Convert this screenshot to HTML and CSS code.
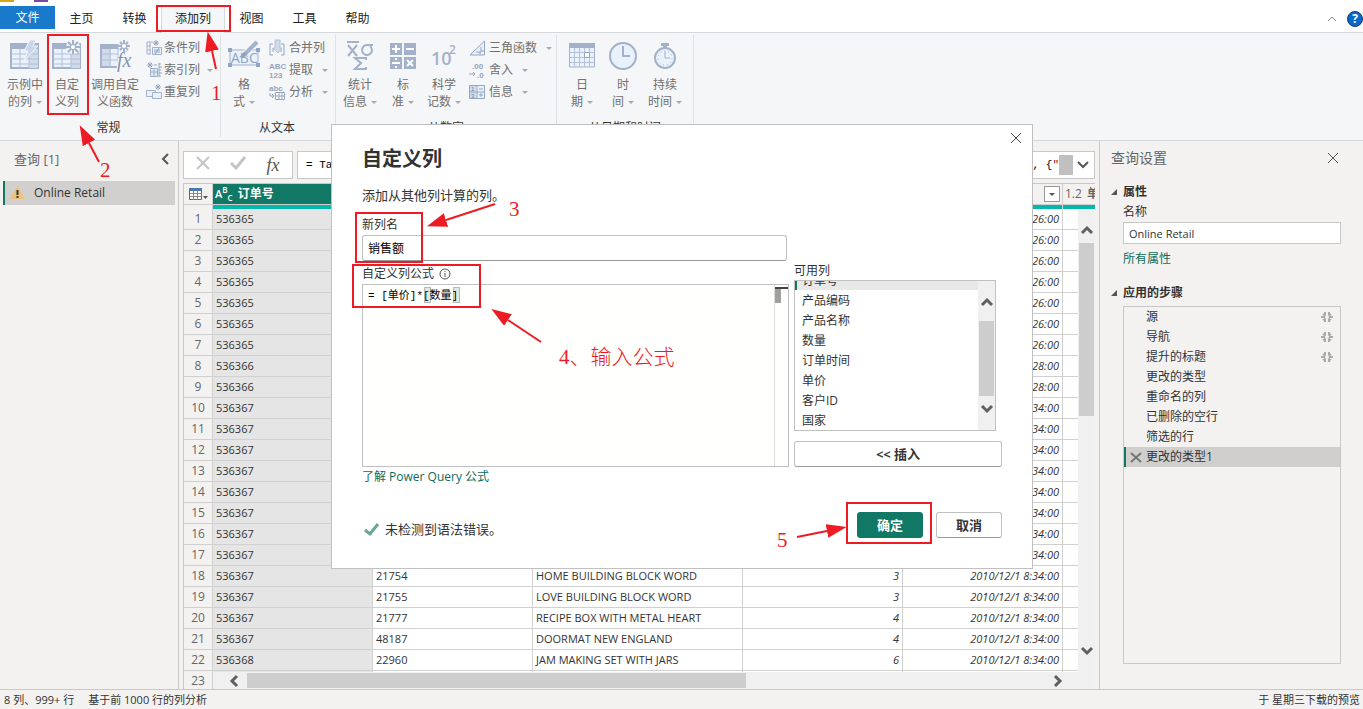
FILE: index.html
```
<!DOCTYPE html>
<html lang="zh-CN">
<head>
  <meta charset="UTF-8" />
  <meta name="viewport" content="width=device-width, initial-scale=1.0"/>
  <title>Power Query 编辑器</title>
  <link rel="stylesheet" href="styles.css">
</head>
<body>
  <div class="titlebar"><span class="logo"></span><span class="save"></span></div>

  <nav class="tabs">
    <button class="tab file">文件</button>
    <button class="tab">主页</button>
    <button class="tab">转换</button>
    <button class="tab active">添加列</button>
    <button class="tab">视图</button>
    <button class="tab">工具</button>
    <button class="tab">帮助</button>
    <span class="tab-right">
      <svg width="10" height="6"><path d="M1 5l4-4 4 4" fill="none" stroke="#888"/></svg>
      <button class="help" aria-label="帮助">?</button>
    </span>
  </nav>

  <div class="ribbon">
    <section class="group g-general">
      <div class="tools">
        <button class="big w44">
          <svg width="30" height="32" viewBox="0 0 30 32"><path d="M1 4h27v24H1z" fill="#e9f2fc" stroke="#a3b2ca" stroke-width="2"/><path d="M0 3h29v6H0z" fill="#a3b2ca"/><path d="M19 9h9v19h-9z" fill="#cfdaea"/><path d="M1 14h27M1 19h27M1 24h27M10 9v19M19 9v19" stroke="#b4c1d6" fill="none"/><path d="M20 0h6l-3 6h5L14 21l4-10h-4z" fill="#c9d7eb" stroke="#f5f6f8"/></svg>
          <span>示例中<br>的列<i class="caret"></i></span>
        </button>
        <button class="big w40">
          <svg width="30" height="32" viewBox="0 0 30 32"><path d="M1 4h27v24H1z" fill="#e9f2fc" stroke="#a3b2ca" stroke-width="2"/><path d="M0 3h29v6H0z" fill="#a3b2ca"/><path d="M19 9h9v19h-9z" fill="#cfdaea"/><path d="M1 14h27M1 19h27M1 24h27M10 9v19M19 9v19" stroke="#b4c1d6" fill="none"/><circle cx="21" cy="7" r="7" fill="#f0f3f8"/><path d="M21 0v14M14 7h14M16 2l10 10M26 2L16 12" stroke="#a3b2ca" stroke-width="2"/><circle cx="21" cy="7" r="2" fill="#fff"/></svg>
          <span>自定<br>义列</span>
        </button>
        <button class="big w56">
          <svg width="32" height="32" viewBox="0 0 32 32"><path d="M2 5h25v22H2z" fill="#e9f2fc" stroke="#a3b2ca" stroke-width="2"/><path d="M1 4h20v5H1z" fill="#a3b2ca"/><path d="M3 9h9v17H3z" fill="#cfdaea"/><path d="M2 14h25M2 20h25M11 9v18M19 9v18" stroke="#b4c1d6"/><path d="M20 12h12v20H17z" fill="#f5f6f8"/><circle cx="25" cy="6" r="6" fill="#f0f3f8"/><path d="M25 0v12M19 6h12M21 2l8 8M29 2l-8 8" stroke="#a3b2ca" stroke-width="2"/><circle cx="25" cy="6" r="2" fill="#fff"/><text x="18" y="27" class="fx">fx</text></svg>
          <span>调用自定<br>义函数</span>
        </button>
        <div class="small-tools">
          <button class="small"><svg width="16" height="16"><path d="M7 2H1v12h4M1 6h4M1 10h4M4 2v12" fill="none" stroke="#a3b2ca"/><path d="M6.500 7.500h9v7h-9z" fill="#e9f2fc" stroke="#a3b2ca"/><path d="M8 10h6M8 12h6M13 8l-4 6M10 0v6M7 3h6M8 1l4 4M12 1L8 5" stroke="#94a5c2"/></svg>条件列</button>
          <button class="small"><svg width="16" height="16"><path d="M4.500 6.500h7v8h-7zM4 10h7M8 6v8" fill="#dce6f4" stroke="#a3b2ca"/><path d="M13 1v14M15 2h-2M16 5h-3M15 8h-2M16 11h-3M15 14h-2M4 0v6M1 3h6M2 1l4 4M6 1L2 5M8 3h3" stroke="#94a5c2"/></svg>索引列<i class="caret"></i></button>
          <button class="small"><svg width="16" height="16"><path d="M.5 6.500h9v6h-9z" fill="#e9f2fc" stroke="#a3b2ca"/><path d="M6.500 8.500h9v6h-9z" fill="#e9f2fc" stroke="#a3b2ca"/><path d="M12 0v6M9 3h6M10 1l4 4M14 1l-4 4" stroke="#94a5c2"/></svg>重复列</button>
        </div>
      </div>
      <h2>常规</h2>
    </section>

    <section class="group g-text">
      <div class="tools">
        <button class="big w44">
          <svg width="32" height="32" viewBox="0 0 32 32"><path d="M2 10h28v15H2z" fill="#e9f2fc" stroke="#a3b2ca"/><path d="M0 8h4v4H0zM28 8h4v4h-4zM0 23h4v4H0zM28 23h4v4h-4z" fill="#94a5c2"/><text x="3" y="23" class="abc">ABC</text><path d="M29 1L16 15" stroke="#f5f6f8" stroke-width="6"/><path d="M29 2L17 14" stroke="#a3b2ca" stroke-width="4"/><path d="M17 12c-4 0-3 4-6 5 4 1 8 0 8-3z" fill="#94a5c2"/></svg>
          <span>格<br>式<i class="caret"></i></span>
        </button>
        <div class="small-tools">
          <button class="small"><svg width="16" height="16"><path d="M4 4H1v11h3M12 4h3v11h-3M4 8v4M12 8v4" fill="none" stroke="#94a5c2"/><path d="M6 0h5v8h2l-4 5-5-5h2z" fill="#cfdaea" stroke="#b4c1d6"/></svg>合并列</button>
          <button class="small"><svg width="16" height="16"><text x="0" y="7" class="mini">ABC</text><text x="0" y="16" class="mini">123</text></svg>提取<i class="caret"></i></button>
          <button class="small"><svg width="16" height="16"><text x="0" y="7" class="mini">abc</text><path d="M6.500 8.500h9v7h-9zM7 12h9M10 9v6M13 9v6" fill="#fff" stroke="#94a5c2"/><path d="M1 9v3h4M3 10l2 2-2 2" fill="none" stroke="#94a5c2"/></svg>分析<i class="caret"></i></button>
        </div>
      </div>
      <h2>从文本</h2>
    </section>

    <section class="group g-number">
      <div class="tools">
        <button class="big w48">
          <svg width="28" height="32" viewBox="0 0 28 32"><path d="M1 2h12M2 5l9 11M11 5L2 16M27 5h-6a5 5 0 1 0 3 1" fill="none" stroke="#a3b2ca" stroke-width="2"/><path d="M20 20v-2H9l6 5-6 6h11v-2" fill="none" stroke="#a3b2ca" stroke-width="2"/></svg>
          <span>统计<br>信息<i class="caret"></i></span>
        </button>
        <button class="big w38">
          <svg width="26" height="32" viewBox="0 0 26 32"><path d="M0 3h12v12H0zM14 3h12v12H14zM0 17h12v12H0zM14 17h12v12H14z" fill="#a3b2ca"/><path d="M2 9h8M6 5v8M16 9h8M2 23h8M17 20l6 6M23 20l-6 6M5 19h2M5 27h2" stroke="#fff" stroke-width="2"/></svg>
          <span>标<br>准<i class="caret"></i></span>
        </button>
        <button class="big w44">
          <svg width="26" height="32" viewBox="0 0 26 32"><text x="0" y="25" class="ten">10</text><text x="18" y="14" class="two">2</text></svg>
          <span>科学<br>记数<i class="caret"></i></span>
        </button>
        <div class="small-tools">
          <button class="small"><svg width="16" height="16"><path d="M15.500 1v14H1z" fill="#e9f2fc" stroke="#94a5c2"/><path d="M12 7v5H7M12 11h3M11 12v3" fill="none" stroke="#94a5c2"/></svg>三角函数<i class="caret"></i></button>
          <button class="small"><svg width="16" height="16"><text x="3" y="7" class="mini">.00</text><text x="8" y="16" class="mini">.0</text><path d="M0 12h6M4 10l2 2-2 2" fill="none" stroke="#94a5c2"/></svg>舍入<i class="caret"></i></button>
          <button class="small"><svg width="16" height="16"><path d="M.5 1.500h15v13H.5z" fill="#e9f2fc" stroke="#94a5c2"/><path d="M1 2h6v12H1z" fill="#cfdaea"/><path d="M8 1v14M1 8h14M10 5h4M10 11h4M12 9v4" stroke="#94a5c2"/><text x="2" y="7" class="tiny">1</text><text x="2" y="14" class="tiny">3</text></svg>信息<i class="caret"></i></button>
        </div>
      </div>
      <h2>从数字</h2>
    </section>

    <section class="group g-date">
      <div class="tools">
        <button class="big w50">
          <svg width="26" height="32" viewBox="0 0 26 32"><path d="M.5 4h25v23H.5z" fill="#e9f2fc" stroke="#a3b2ca"/><path d="M0 3h26v5H0z" fill="#a3b2ca"/><path d="M1 12.500h24M1 17.500h24M1 22.500h24M5.500 8v19M10.500 8v19M15.500 8v19M20.500 8v19" stroke="#b4c1d6"/><path d="M15.500 12.500h5v5h-5z" fill="#fff" stroke="#94a5c2"/></svg>
          <span>日<br>期<i class="caret"></i></span>
        </button>
        <button class="big w32">
          <svg width="28" height="32" viewBox="0 0 28 32"><circle cx="14" cy="16" r="13" fill="#e9f2fc" stroke="#a3b2ca" stroke-width="2"/><path d="M14 6v10h7" fill="none" stroke="#a3b2ca" stroke-width="2"/></svg>
          <span>时<br>间<i class="caret"></i></span>
        </button>
        <button class="big w52">
          <svg width="22" height="32" viewBox="0 0 22 32"><circle cx="11" cy="18" r="10" fill="#e9f2fc" stroke="#a3b2ca" stroke-width="2"/><circle cx="11" cy="18" r="7" fill="none" stroke="#a3b2ca" stroke-dasharray="1 3"/><path d="M7 3h8v3h-2v3H9V6H7z" fill="#a3b2ca"/><path d="M11 11v7h5" fill="none" stroke="#a3b2ca"/></svg>
          <span>持续<br>时间<i class="caret"></i></span>
        </button>
      </div>
      <h2>从日期和时间</h2>
    </section>
  </div>

  <main class="workspace">
    <aside class="queries">
      <header><h2>查询 [1]</h2><svg width="8" height="12"><path d="M7 1L2 6l5 5" fill="none" stroke="#555" stroke-width="2"/></svg></header>
      <a class="query" href="#"><svg width="15" height="14"><path d="M7.500 0L15 13H0z" fill="#edc27c"/><path d="M7.500 4v5M7.500 10v2" stroke="#333" stroke-width="2"/></svg>Online Retail</a>
    </aside>

    <section class="preview">
      <div class="formula-bar">
        <div class="formula-actions">
          <button aria-label="取消"><svg width="16" height="14"><path d="M2 1l12 12M14 1L2 13" stroke="#c4c4c4" stroke-width="2"/></svg></button>
          <button aria-label="确认"><svg width="16" height="14"><path d="M1 7l5 5L15 1" fill="none" stroke="#c4c4c4" stroke-width="3"/></svg></button>
          <button class="fx-btn">fx</button>
        </div>
        <div class="formula-text">
          <input type="text" value="= Table" aria-label="公式">
          <span>, {<b>"</b></span><i class="block"></i>
          <svg width="12" height="8"><path d="M1 1l5 5 5-5" fill="none" stroke="#555" stroke-width="2"/></svg>
        </div>
      </div>

      <div class="grid">
        <table>
          <colgroup><col class="c-num"><col class="c-std"><col class="c-std"><col class="c-wide"><col class="c-std"><col class="c-std"><col class="c-std"></colgroup>
          <thead>
            <tr>
              <th><svg width="20" height="13"><path d="M.5.500h12v11H.5z" fill="#fff" stroke="#666"/><path d="M0 0h13v3H0z" fill="#4a79b0"/><path d="M1 5.500h12M1 8.500h12M4.500 3v9M8.500 3v9" stroke="#888"/><path d="M14 8h5l-2.500 3z" fill="#555"/></svg></th>
              <th class="picked"><span class="type">A<sup>B</sup><sub>C</sub></span>订单号</th>
              <th></th><th></th><th></th>
              <th class="menu"><button aria-label="筛选"><i class="caret"></i></button></th>
              <th class="num-type"><span>1.2</span>单价</th>
            </tr>
            <tr class="quality"><td></td><td></td><td></td><td></td><td></td><td></td><td></td></tr>
          </thead>
          <tbody id="rows"></tbody>
        </table>
        <div class="vscroll"><svg width="12" height="9"><path d="M1 7l5-5 5 5" fill="none" stroke="#606060" stroke-width="3"/></svg><i></i><svg width="12" height="9"><path d="M1 2l5 5 5-5" fill="none" stroke="#606060" stroke-width="3"/></svg></div>
        <div class="hscroll"><svg width="9" height="12"><path d="M7 1L2 6l5 5" fill="none" stroke="#606060" stroke-width="3"/></svg><i></i><svg width="9" height="12"><path d="M2 1l5 5-5 5" fill="none" stroke="#606060" stroke-width="3"/></svg></div>
      </div>
    </section>

    <aside class="settings">
      <header><h2>查询设置</h2><button class="close" aria-label="关闭"><svg width="12" height="12"><path d="M1 1l10 10M11 1L1 11" stroke="#555"/></svg></button></header>
      <h3>属性</h3>
      <label for="queryName">名称</label>
      <input id="queryName" type="text" value="Online Retail">
      <a class="all-props" href="#">所有属性</a>
      <h3>应用的步骤</h3>
      <ul class="steps" id="steps"></ul>
    </aside>
  </main>

  <footer class="statusbar"><span>8 列、999+ 行</span><span>基于前 1000 行的列分析</span><span class="right">于 星期三下载的预览</span></footer>

  <svg class="marks" width="240" height="190">
    <defs>
      <marker id="head" viewBox="0 0 20 14" refX="0" refY="7" markerWidth="20" markerHeight="14" markerUnits="userSpaceOnUse" orient="auto"><path d="M0 0l20 7L0 14z" fill="#ed1c24"/></marker>
    </defs>
    <rect x="157" y="6" width="73" height="25"/>
    <rect x="48" y="35" width="40" height="79"/>
    <line x1="216" y1="69" x2="212" y2="51"/>
    <line x1="99" y1="162" x2="89" y2="143"/>
    <text x="211" y="100">1</text>
    <text x="100" y="177">2</text>
  </svg>

  <div class="overlay">
    <form class="dialog" role="dialog" aria-labelledby="dlgTitle">
      <button type="button" class="close dialog-close" aria-label="关闭"><svg width="12" height="12"><path d="M1 1l10 10M11 1L1 11" stroke="#444"/></svg></button>
      <h1 id="dlgTitle">自定义列</h1>
      <p class="intro">添加从其他列计算的列。</p>
      <div class="fields">
        <div class="left">
          <label for="colName">新列名</label>
          <input id="colName" type="text" value="销售额">
          <label for="formula" class="formula-label">自定义列公式 <svg width="12" height="12"><circle cx="6" cy="6" r="5" fill="none" stroke="#555"/><path d="M6 5v4M6 3v1" stroke="#555"/></svg></label>
          <div class="editor">
            <i class="bracket open"></i><i class="bracket end"></i>
            <textarea id="formula" spellcheck="false">= [单价]*[数量]</textarea>
            <div class="ruler"></div>
          </div>
        </div>
        <div class="available">
          <span id="avail">可用列</span>
          <div class="listbox">
            <ul role="listbox" aria-labelledby="avail">
              <li role="option" class="on">订单号</li>
              <li role="option">产品编码</li>
              <li role="option">产品名称</li>
              <li role="option">数量</li>
              <li role="option">订单时间</li>
              <li role="option">单价</li>
              <li role="option">客户ID</li>
              <li role="option">国家</li>
            </ul>
            <div class="list-scroll"><svg width="12" height="9"><path d="M1 7l5-5 5 5" fill="none" stroke="#606060" stroke-width="3"/></svg><i></i><svg width="12" height="9"><path d="M1 2l5 5 5-5" fill="none" stroke="#606060" stroke-width="3"/></svg></div>
          </div>
          <button type="button" class="btn">&lt;&lt; 插入</button>
        </div>
      </div>
      <a class="learn" href="#">了解 Power Query 公式</a>
      <div class="actions">
        <span class="status"><svg width="15" height="13"><path d="M1 7l5 4L14 1" fill="none" stroke="#6aa896" stroke-width="3"/></svg>未检测到语法错误。</span>
        <button type="button" class="btn primary">确定</button>
        <button type="button" class="btn">取消</button>
      </div>
      <svg class="marks" width="702" height="445" viewBox="331 124 702 445">
        <rect x="356" y="213" width="66" height="49"/>
        <rect x="353" y="265" width="127" height="42"/>
        <rect x="847" y="503" width="84" height="40"/>
        <line x1="495" y1="204" x2="446" y2="220"/>
        <line x1="541" y1="342" x2="508" y2="320"/>
        <line x1="797" y1="537" x2="827" y2="531"/>
        <text x="509" y="216">3</text>
        <text x="559" y="364">4、输入公式</text>
        <text x="777" y="547">5</text>
      </svg>
    </form>
  </div>

  <script>
    const orders = [
      [536365, "", "", "", "8:26"], [536365, "", "", "", "8:26"], [536365, "", "", "", "8:26"],
      [536365, "", "", "", "8:26"], [536365, "", "", "", "8:26"], [536365, "", "", "", "8:26"],
      [536365, "", "", "", "8:26"], [536366, "", "", "", "8:28"], [536366, "", "", "", "8:28"],
      [536367, "", "", "", "8:34"], [536367, "", "", "", "8:34"], [536367, "", "", "", "8:34"],
      [536367, "", "", "", "8:34"], [536367, "", "", "", "8:34"], [536367, "", "", "", "8:34"],
      [536367, "", "", "", "8:34"], [536367, "", "", "", "8:34"],
      [536367, "21754", "HOME BUILDING BLOCK WORD", 3, "8:34"],
      [536367, "21755", "LOVE BUILDING BLOCK WORD", 3, "8:34"],
      [536367, "21777", "RECIPE BOX WITH METAL HEART", 4, "8:34"],
      [536367, "48187", "DOORMAT NEW ENGLAND", 4, "8:34"],
      [536368, "22960", "JAM MAKING SET WITH JARS", 6, "8:34"],
      ["", "", "", "", ""]
    ];
    document.getElementById("rows").innerHTML = orders.map((o, i) =>
      `<tr><th>${i + 1}</th><td class="picked">${o[0]}</td><td>${o[1]}</td><td>${o[2]}</td>` +
      `<td class="number">${o[3]}</td><td class="number">${o[4] ? `2010/12/1 ${o[4]}:00` : ""}</td><td></td></tr>`
    ).join("");

    const gear = '<svg width="12" height="12"><path d="M4 1v10M8 1v10M0 6h12M2 3l8 6M10 3l-8 6" stroke="#aaa" stroke-width="2"/><circle cx="6" cy="6" r="2" fill="#f3f2f1"/></svg>';
    const remove = '<svg class="remove" width="12" height="11"><path d="M1 1l10 9M11 1L1 10" stroke="#777" stroke-width="2"/></svg>';
    const steps = ["源", "导航", "提升的标题", "更改的类型", "重命名的列", "已删除的空行", "筛选的行", "更改的类型1"];
    document.getElementById("steps").innerHTML = steps.map((s, i) =>
      i === steps.length - 1 ? `<li class="on">${remove}${s}</li>` : `<li>${s}${i < 3 ? gear : ""}</li>`
    ).join("");
  </script>
</body>
</html>
```
FILE: styles.css
```
* {
  box-sizing: border-box;
}

body {
  margin: 0;
  height: 100vh;
  display: flex;
  flex-direction: column;
  overflow: hidden;
  background: #f3f2f1;
  color: #333;
  font-family: "Open Sans", "Noto Sans CJK SC", sans-serif;
  font-size: 12px;
  line-height: 18px;
}

h1, h2, h3, p, ul {
  margin: 0;
  padding: 0;
  font-weight: normal;
  font-size: 12px;
}

ul {
  list-style: none;
}

button, input, textarea {
  font: inherit;
  color: inherit;
  border: 0;
  padding: 0;
  background: none;
}

a {
  color: #0f6b59;
  text-decoration: none;
}

svg {
  flex: none;
  overflow: visible;
}

.caret {
  display: inline-block;
  border: 3px solid transparent;
  border-top-color: #aaa;
  border-bottom: 0;
  margin-left: 5px;
  vertical-align: middle;
}

/* title bar and tabs */
.titlebar {
  flex: none;
  height: 6px;
  background: #fff;
  display: flex;
  gap: 20px;
}

.logo {
  width: 14px;
  height: 2px;
  background: #d9a514;
}

.save {
  width: 14px;
  height: 2px;
  background: #7b4ba0;
}

.tabs {
  flex: none;
  height: 27px;
  display: flex;
  background: #fff;
  border-bottom: 1px solid #d5d8db;
}

.tab {
  width: 53px;
  height: 25px;
  color: #222;
}

.tab.file {
  width: 55px;
  height: 23px;
  background: #1979ca;
  color: #fff;
}

.tab.active {
  width: 64px;
  height: 27px;
  padding-bottom: 2px;
  background: #f5f6f8;
  border: 1px solid #d5d8db;
  border-bottom: 0;
}

.tab-right {
  margin-left: auto;
  display: flex;
  align-items: center;
  gap: 10px;
}

.help {
  width: 16px;
  height: 16px;
  border-radius: 50%;
  background: #0a66c8;
  border: 1px solid #123c74;
  color: #fff;
  font-weight: bold;
  line-height: 14px;
}

/* ribbon */
.ribbon {
  flex: none;
  height: 108px;
  display: flex;
  padding: 2px 0 3px;
  background: #f5f6f8;
  border-bottom: 1px solid #d5d8db;
}

.group {
  display: flex;
  flex-direction: column;
  justify-content: space-between;
  border-right: 1px solid #dfe2e5;
}

.group h2 {
  text-align: center;
}

.g-general { width: 221px; padding-left: 3px; }
.g-general h2 { margin-right: 6px; }
.g-text { width: 115px; padding-left: 1px; }
.g-text h2 { margin-right: 3px; }
.g-number { width: 221px; }
.g-date { width: 137px; }

.tools {
  display: flex;
  padding-top: 2px;
}

.big {
  display: flex;
  flex-direction: column;
  align-items: center;
  padding-top: 3px;
  color: #707070;
  line-height: 17px;
  white-space: nowrap;
}

.big span {
  margin-top: 4px;
}

.big .caret {
  margin-left: 4px;
}

.w32 { width: 32px; }
.w38 { width: 38px; }
.w40 { width: 40px; }
.w44 { width: 44px; }
.w48 { width: 48px; }
.w50 { width: 50px; }
.w52 { width: 52px; }
.w56 { width: 56px; }

.small-tools {
  margin-left: 3px;
}

.small {
  display: flex;
  align-items: center;
  height: 22px;
  gap: 2px;
  color: #707070;
  white-space: nowrap;
}

.g-text .small, .g-number .small {
  gap: 4px;
}

.fx, .fx-btn {
  font-family: "Liberation Serif", serif;
  font-style: italic;
}

.fx {
  font-size: 20px;
  fill: #8494b0;
}

.abc {
  font-size: 14px;
  fill: #94a5c2;
}

.mini, .tiny {
  font-family: "Liberation Sans", sans-serif;
  line-height: 8px;
}

.mini {
  font-size: 8px;
  font-weight: bold;
  fill: #94a5c2;
}

.tiny {
  font-size: 6px;
  fill: #7486a8;
}

.ten {
  font-size: 18px;
  font-weight: 600;
  fill: #a3b2ca;
}

.two {
  font-size: 12px;
  font-weight: 600;
  fill: #a3b2ca;
}

/* main area */
.workspace {
  flex: 1;
  min-height: 0;
  display: flex;
}

.queries {
  width: 179px;
  padding: 9px 3px;
  border-right: 1px solid #c8c8c8;
}

.queries header, .settings header {
  display: flex;
  justify-content: space-between;
  align-items: center;
}

.queries header {
  padding: 0 6px 0 11px;
}

.queries h2, .settings h2 {
  font-size: 13px;
  color: #666;
}

.settings h2 {
  font-size: 14px;
}

.query {
  display: flex;
  align-items: center;
  gap: 9px;
  height: 24px;
  margin-top: 13px;
  padding-left: 5px;
  border-left: 2px solid #117865;
  background: #d2d0ce;
  color: #333;
}

.preview {
  flex: 1;
  min-width: 0;
  display: flex;
  flex-direction: column;
  padding: 10px 4px 0;
}

.formula-bar {
  display: flex;
  gap: 4px;
  height: 28px;
  margin-bottom: 4px;
}

.formula-actions, .formula-text {
  display: flex;
  align-items: center;
  background: #fff;
  border: 1px solid #c8c8c8;
}

.formula-actions {
  width: 110px;
  padding: 0 10px 0 11px;
  justify-content: space-between;
}

.fx-btn {
  width: 18px;
  font-size: 18px;
  color: #555;
}

.formula-text {
  flex: 1;
  padding: 0 5px 0 8px;
  font-family: "Liberation Mono", monospace;
  font-size: 11px;
  color: #000;
}

.formula-text input {
  flex: 1;
}

.formula-text b {
  font-weight: normal;
  color: #a31515;
}

.block {
  width: 14px;
  height: 20px;
  margin-right: 4px;
  background: #c0c0c0;
}

.grid {
  flex: 1;
  min-height: 0;
  position: relative;
  overflow: hidden;
  border: 1px solid #c8c8c8;
  border-width: 1px 0 0 1px;
  background: #fff;
}

.grid table {
  width: 1039px;
  table-layout: fixed;
  border-spacing: 0;
  font-size: 11px;
  line-height: 16px;
}

.c-num { width: 29px; }
.c-std { width: 160px; }
.c-wide { width: 210px; }

.grid th, .grid td {
  height: 21px;
  padding: 0 3px;
  border-right: 1px solid #d0d0d0;
  border-bottom: 1px solid #d0d0d0;
  white-space: nowrap;
}

.grid th {
  padding: 0;
  background: #f3f2f1;
  color: #666;
  font-weight: normal;
  font-size: 12px;
}

.grid thead svg {
  display: block;
  margin-left: 5px;
}

.grid thead .picked {
  background: #117865;
  color: #fff;
  font-weight: bold;
  text-align: left;
  line-height: 18px;
}

.type {
  display: inline-block;
  margin: 0 5px 0 2px;
  font-size: 11px;
  font-weight: 600;
}

.type sup, .type sub {
  font-size: 8px;
  line-height: 1px;
}

.grid thead .menu {
  text-align: right;
}

.menu button {
  width: 16px;
  height: 16px;
  margin-right: 2px;
  border: 1px solid #999;
  background: #fff;
  line-height: 10px;
}

.menu .caret {
  margin: 0;
  border-top-color: #555;
}

.grid .num-type {
  text-align: left;
  padding-left: 2px;
  font-weight: bold;
}

.num-type span {
  margin-right: 5px;
  font-weight: normal;
}

.quality td {
  height: 4px;
  background: #01b8aa;
  border-bottom: 0;
}

.quality td:first-child {
  background: #f3f2f1;
}

.grid td.picked {
  background: #e5e5e5;
}

.grid .number {
  text-align: right;
  font-style: italic;
}

/* scroll bars */
.vscroll, .list-scroll {
  display: flex;
  flex-direction: column;
  align-items: center;
  width: 17px;
  background: #f0f0f0;
}

.vscroll {
  position: absolute;
  top: 25px;
  right: 0;
  bottom: 17px;
  padding: 17px 0;
}

.vscroll i {
  width: 15px;
  height: 173px;
  margin: 8px 0 auto;
  background: #cdcdcd;
}

.hscroll {
  position: absolute;
  left: 29px;
  right: 0;
  bottom: 0;
  height: 17px;
  display: flex;
  align-items: center;
  padding: 0 33px 0 17px;
  background: #f0f0f0;
}

.hscroll i {
  width: 499px;
  height: 15px;
  margin: 0 auto 0 8px;
  background: #cdcdcd;
}

/* query settings */
.settings {
  width: 264px;
  padding: 8px 22px 25px 11px;
  border-left: 1px solid #c8c8c8;
  display: flex;
  flex-direction: column;
}

.settings header {
  margin-bottom: 15px;
}

.settings header .close {
  margin-right: 2px;
}

.close {
  width: 12px;
  height: 12px;
}

.close svg {
  display: block;
}

.settings h3 {
  font-weight: bold;
  line-height: 20px;
}

.settings h3::before {
  content: "";
  display: inline-block;
  margin-right: 6px;
  vertical-align: 1px;
  border: 3px solid #555;
  border-top-color: transparent;
  border-left-color: transparent;
}

.settings label, .all-props {
  margin-left: 12px;
  line-height: 20px;
}

.settings input {
  height: 22px;
  margin: 0 0 5px 12px;
  padding: 0 5px;
  font-size: 11px;
  background: #fff;
  border: 1px solid #c8c8c8;
}

.all-props {
  margin-bottom: 14px;
}

.steps {
  flex: 1;
  margin: 3px 0 0 12px;
  border: 1px solid #c8c8c8;
}

.steps li {
  display: flex;
  align-items: center;
  justify-content: space-between;
  height: 20px;
  padding: 0 7px 0 22px;
}

.steps .on {
  justify-content: flex-start;
  gap: 4px;
  padding-left: 4px;
  background: #d0cfce;
  border-left: 2px solid #117865;
}

.statusbar {
  flex: none;
  display: flex;
  gap: 14px;
  height: 20px;
  padding: 1px 3px 0 4px;
  border-top: 1px solid #c8c8c8;
  font-size: 11px;
}

.statusbar .right {
  margin-left: auto;
}

/* custom column dialog */
.overlay {
  position: fixed;
  inset: 0;
  display: flex;
  justify-content: center;
  align-items: flex-start;
  padding: 124px 0 0 1px;
}

.dialog {
  position: relative;
  width: 702px;
  padding: 21px 30px 30px;
  background: #fff;
  border: 1px solid #c0c0c0;
}

.dialog-close {
  position: absolute;
  top: 7px;
  right: 10px;
}

.dialog h1 {
  font-size: 20px;
  font-weight: bold;
  line-height: 26px;
}

.intro {
  margin: 14px 0 11px;
  font-size: 13px;
  line-height: 18px;
}

.fields {
  display: grid;
  grid-template-columns: 427px 208px;
  gap: 5px;
}

.left {
  display: flex;
  flex-direction: column;
}

.left input {
  width: 425px;
  height: 26px;
  padding: 0 5px;
  border: 1px solid #c0c0c0;
  border-bottom-color: #999;
  border-radius: 3px;
  color: #000;
}

.left label {
  line-height: 20px;
}

.formula-label {
  display: flex;
  align-items: center;
  gap: 5px;
  margin-top: 3px;
}

.editor {
  position: relative;
  display: flex;
  height: 183px;
  border: 1px solid #c0c0c0;
  background: #fffffe;
}

.editor textarea {
  position: relative;
  flex: 1;
  padding: 1px 5px;
  resize: none;
  outline: 0;
  font-family: "Liberation Mono", "Noto Sans CJK SC", monospace;
  font-size: 11px;
  line-height: 20px;
  color: #000;
}

.bracket {
  position: absolute;
  top: 2px;
  width: 7px;
  height: 16px;
  border: 1px solid #b9b9b9;
  background: #dfe9df;
}

.bracket.open { left: 61px; }
.bracket.end { left: 90px; }

.ruler {
  width: 14px;
  border-left: 1px solid #ddd;
  padding-top: 2px;
}

.ruler::before {
  content: "";
  display: block;
  height: 2px;
  background: #444;
}

.ruler::after {
  content: "";
  display: block;
  width: 6px;
  height: 14px;
  background: #a0a0a0;
}

.available {
  align-self: end;
  display: flex;
  flex-direction: column;
}

.listbox {
  display: flex;
  width: 202px;
  height: 151px;
  margin-bottom: 10px;
  border: 1px solid #c0c0c0;
}

.listbox ul {
  flex: 1;
  display: flex;
  flex-direction: column;
  justify-content: flex-end;
  overflow: hidden;
}

.listbox li {
  flex: none;
  height: 20px;
  padding-left: 7px;
  line-height: 22px;
}

.listbox .on {
  padding-left: 5px;
  border-left: 2px solid #117865;
  background: #e8e8e8;
}

.list-scroll {
  padding: 17px 0;
}

.list-scroll i {
  width: 15px;
  height: 75px;
  margin: 14px 0 8px;
  background: #cdcdcd;
}

.btn {
  height: 26px;
  background: #fff;
  border: 1px solid #c0c0c0;
  border-bottom-color: #999;
  border-radius: 3px;
  font-size: 13px;
  font-weight: bold;
}

.btn.primary {
  background: #117865;
  border-color: #117865;
  color: #fff;
}

.learn {
  display: inline-block;
  line-height: 20px;
}

.actions {
  display: flex;
  align-items: center;
  gap: 13px;
  margin-top: 25px;
}

.actions .btn {
  width: 66px;
}

.status {
  flex: 1;
  display: flex;
  align-items: center;
  gap: 6px;
  padding: 8px 0 0 2px;
  font-size: 13px;
}

/* red tutorial marks */
.marks {
  position: absolute;
  top: 0;
  left: 0;
  pointer-events: none;
}

.dialog .marks {
  top: -1px;
  left: -1px;
}

.marks rect {
  fill: none;
  stroke: #ed1c24;
  stroke-width: 2;
}

.marks line {
  stroke: #ed1c24;
  stroke-width: 2;
  marker-end: url(#head);
}

.marks text {
  fill: #ed1c24;
  font-family: "Liberation Serif", "Noto Sans CJK SC", serif;
  font-size: 21px;
  font-weight: 300;
}
```
